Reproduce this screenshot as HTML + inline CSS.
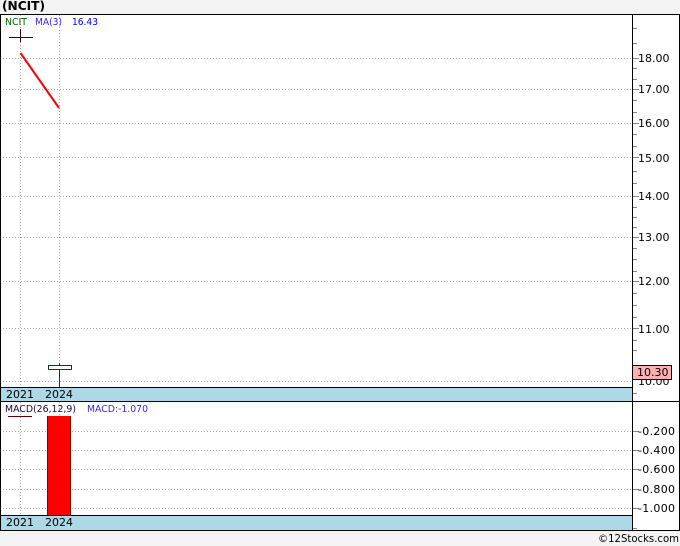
<!DOCTYPE html>
<html><head><meta charset="utf-8"><style>
html,body{margin:0;padding:0;background:#f3f3f3}
svg{display:block}
text{font-family:"DejaVu Sans",sans-serif;font-size:11px}
</style></head><body>
<svg width="680" height="546" viewBox="0 0 680 546" xmlns="http://www.w3.org/2000/svg" shape-rendering="crispEdges">
<rect width="680" height="546" fill="#f3f3f3"/>
<rect x="0" y="14" width="680" height="517" fill="#fff"/>
<g stroke="#a6a6a6" stroke-dasharray="1 2" fill="none">
<path d="M0 58.5H632M0 89.5H632M0 123.5H632M0 157.5H632M0 196.5H632M0 237.5H632M0 281.5H632M0 328.5H632M0 381.5H632"/>
<path d="M0 431.5H632M0 450.5H632M0 469.5H632M0 489.5H632M0 508.5H632"/>
<path d="M20.5 15V387M59.5 15V387M20.5 402V515M59.5 402V515"/>
</g>
<rect x="0" y="387" width="632" height="14" fill="#add8e6"/>
<rect x="0" y="515" width="632" height="15" fill="#add8e6"/>
<g stroke="#000" fill="none">
<path d="M0 14.5H680M0 387.5H632M0 401.5H680M0 515.5H632M0 530.5H680M632.5 14V530M679.5 14V530"/>
<path d="M0.5 14V530"/>
</g>
<g stroke="#888" fill="none">
<path d="M633 28.5h4M633 43.5h4M633 58.5h6M633 68.5h4M633 79.5h4M633 89.5h6M633 100.5h4M633 112.5h4M633 123.5h6M633 134.5h4M633 146.5h4M633 157.5h6M633 171.5h4M633 183.5h4M633 196.5h6M633 207.5h4M633 217.5h4M633 227.5h4M633 237.5h6M633 248.5h4M633 259.5h4M633 271.5h4M633 281.5h6M633 293.5h4M633 305.5h4M633 317.5h4M633 328.5h6M633 340.5h4M633 350.5h4M633 393.5h4"/>
<path d="M633 431.5h6M633 450.5h6M633 469.5h6M633 489.5h6M633 508.5h6M633 528.5h4"/>
</g>
<text x="2" y="10" font-weight="bold" style="font-size:12px" fill="#000" textLength="43" lengthAdjust="spacingAndGlyphs">(NCIT)</text>
<text x="5" y="25" style="font-size:10px" fill="#006400" textLength="22" lengthAdjust="spacingAndGlyphs">NCIT</text>
<text x="35" y="25" style="font-size:10px" fill="#3a1fe0" textLength="27" lengthAdjust="spacingAndGlyphs">MA(3)</text>
<text x="72" y="25" style="font-size:10px" fill="#0000ff" textLength="26" lengthAdjust="spacingAndGlyphs">16.43</text>
<path d="M9 37.5H33M20.5 29V42" stroke="#400000" fill="none"/>
<path d="M20.5 53L59 108" stroke="#f00" stroke-width="2" fill="none" shape-rendering="auto"/>
<rect x="48.5" y="365.5" width="23" height="4" fill="#fff" stroke="#004d00"/>
<path d="M59.5 363V365M59.5 370V387" stroke="#004d00" fill="none"/>
<g fill="#000">
<text x="638" y="62">18.00</text>
<text x="638" y="93">17.00</text>
<text x="638" y="127">16.00</text>
<text x="638" y="162">15.00</text>
<text x="638" y="200">14.00</text>
<text x="638" y="241">13.00</text>
<text x="638" y="285">12.00</text>
<text x="638" y="333">11.00</text>
<text x="638" y="385">10.00</text>
<text x="638" y="435" textLength="37">-0.200</text>
<text x="638" y="454" textLength="37">-0.400</text>
<text x="638" y="473" textLength="37">-0.600</text>
<text x="638" y="493" textLength="37">-0.800</text>
<text x="638" y="512" textLength="37">-1.000</text>
<text x="6" y="398">2021</text>
<text x="45" y="398">2024</text>
<text x="6" y="526">2021</text>
<text x="45" y="526">2024</text>
</g>
<rect x="632.5" y="365.5" width="39" height="14" fill="#ffb0b0" stroke="#000"/>
<text x="637" y="376" fill="#000">10.30</text>
<text x="5" y="412" style="font-size:10px" fill="#200040" textLength="71" lengthAdjust="spacingAndGlyphs">MACD(26,12,9)</text>
<text x="87" y="412" style="font-size:10px" fill="#3a1fe0" textLength="61" lengthAdjust="spacingAndGlyphs">MACD:-1.070</text>
<path d="M8 416.5H32" stroke="#600000" fill="none"/>
<rect x="47" y="416" width="24" height="99" fill="#f00"/>
<path d="M70.5 416V515M47.5 416V515" stroke="#800000" fill="none"/>
<text x="598" y="542" fill="#000" textLength="81" lengthAdjust="spacingAndGlyphs">©12Stocks.com</text>
</svg>
</body></html>
